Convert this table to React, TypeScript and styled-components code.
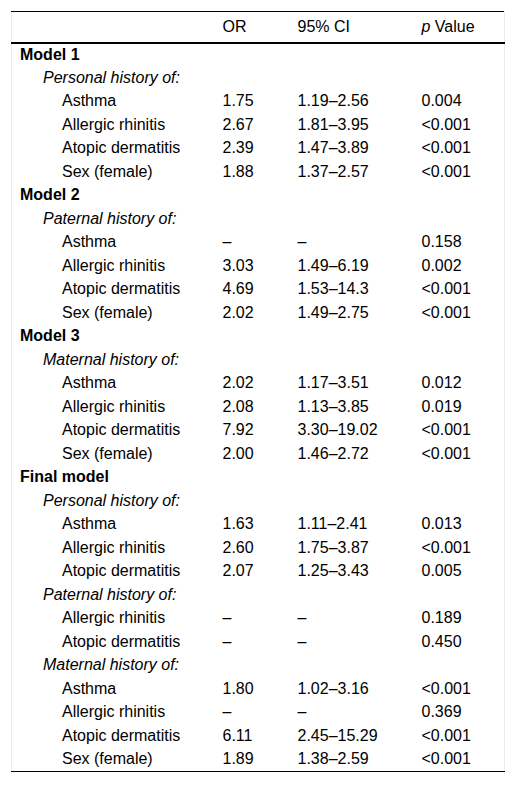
import React from "react";
import styled, { createGlobalStyle } from "styled-components";

const GlobalStyle = createGlobalStyle`
  body {
    margin: 0;
    background: #fff;
    font-family: "Liberation Sans", Arial, sans-serif;
    color: #000;
  }
`;

const Page = styled.div`
  padding: 11px 11px 0 11px;
`;

const Table = styled.table`
  width: 494px;
  border-collapse: collapse;
  font-family: "Liberation Sans", Arial, sans-serif;
  color: #000;
  border-left: 1px solid #ececec;
  border-right: 1px solid #ececec;
  border-top: 1px solid #000;
  border-bottom: 1px solid #000;
`;

const HeadRow = styled.tr`
  height: 31px;
  border-bottom: 2px solid #000;
`;

const Row = styled.tr`
  height: 23.5px;
`;

const Cell = styled.td<{ $indent?: number; $bold?: boolean; $italic?: boolean }>`
  padding: 0 0 0 ${({ $indent }) => 8 + ($indent || 0)}px;
  font-size: 16px;
  line-height: 18px;
  font-weight: ${({ $bold }) => ($bold ? "bold" : "normal")};
  font-style: ${({ $italic }) => ($italic ? "italic" : "normal")};
  white-space: nowrap;
  vertical-align: middle;
`;

const HeadCell = styled.th`
  padding: 0 0 0 8px;
  font-size: 16px;
  font-weight: normal;
  text-align: left;
  line-height: 18px;
`;

type Item = [string, string, string, string];
type Group = { title: string; items: Item[] };
type Model = { name: string; groups: Group[] };

const models: Model[] = [
  {
    name: "Model 1",
    groups: [
      {
        title: "Personal history of:",
        items: [
          ["Asthma", "1.75", "1.19–2.56", "0.004"],
          ["Allergic rhinitis", "2.67", "1.81–3.95", "<0.001"],
          ["Atopic dermatitis", "2.39", "1.47–3.89", "<0.001"],
          ["Sex (female)", "1.88", "1.37–2.57", "<0.001"],
        ],
      },
    ],
  },
  {
    name: "Model 2",
    groups: [
      {
        title: "Paternal history of:",
        items: [
          ["Asthma", "–", "–", "0.158"],
          ["Allergic rhinitis", "3.03", "1.49–6.19", "0.002"],
          ["Atopic dermatitis", "4.69", "1.53–14.3", "<0.001"],
          ["Sex (female)", "2.02", "1.49–2.75", "<0.001"],
        ],
      },
    ],
  },
  {
    name: "Model 3",
    groups: [
      {
        title: "Maternal history of:",
        items: [
          ["Asthma", "2.02", "1.17–3.51", "0.012"],
          ["Allergic rhinitis", "2.08", "1.13–3.85", "0.019"],
          ["Atopic dermatitis", "7.92", "3.30–19.02", "<0.001"],
          ["Sex (female)", "2.00", "1.46–2.72", "<0.001"],
        ],
      },
    ],
  },
  {
    name: "Final model",
    groups: [
      {
        title: "Personal history of:",
        items: [
          ["Asthma", "1.63", "1.11–2.41", "0.013"],
          ["Allergic rhinitis", "2.60", "1.75–3.87", "<0.001"],
          ["Atopic dermatitis", "2.07", "1.25–3.43", "0.005"],
        ],
      },
      {
        title: "Paternal history of:",
        items: [
          ["Allergic rhinitis", "–", "–", "0.189"],
          ["Atopic dermatitis", "–", "–", "0.450"],
        ],
      },
      {
        title: "Maternal history of:",
        items: [
          ["Asthma", "1.80", "1.02–3.16", "<0.001"],
          ["Allergic rhinitis", "–", "–", "0.369"],
          ["Atopic dermatitis", "6.11", "2.45–15.29", "<0.001"],
          ["Sex (female)", "1.89", "1.38–2.59", "<0.001"],
        ],
      },
    ],
  },
];

const App: React.FC = () => {
  return (
    <Page>
      <GlobalStyle />
      <Table>
        <colgroup>
          <col style={{ width: 203 }} />
          <col style={{ width: 75 }} />
          <col style={{ width: 124 }} />
          <col />
        </colgroup>
        <thead>
          <HeadRow>
            <HeadCell />
            <HeadCell>OR</HeadCell>
            <HeadCell>95% CI</HeadCell>
            <HeadCell>
              <i>p</i> Value
            </HeadCell>
          </HeadRow>
        </thead>
        <tbody>
          {models.map((m) => (
            <React.Fragment key={m.name}>
              <Row>
                <Cell $bold colSpan={4}>
                  {m.name}
                </Cell>
              </Row>
              {m.groups.map((g) => (
                <React.Fragment key={g.title}>
                  <Row>
                    <Cell $italic $indent={23} colSpan={4}>
                      {g.title}
                    </Cell>
                  </Row>
                  {g.items.map((it) => (
                    <Row key={it[0]}>
                      <Cell $indent={42}>{it[0]}</Cell>
                      <Cell>{it[1]}</Cell>
                      <Cell>{it[2]}</Cell>
                      <Cell>{it[3]}</Cell>
                    </Row>
                  ))}
                </React.Fragment>
              ))}
            </React.Fragment>
          ))}
        </tbody>
      </Table>
    </Page>
  );
};

export default App;
